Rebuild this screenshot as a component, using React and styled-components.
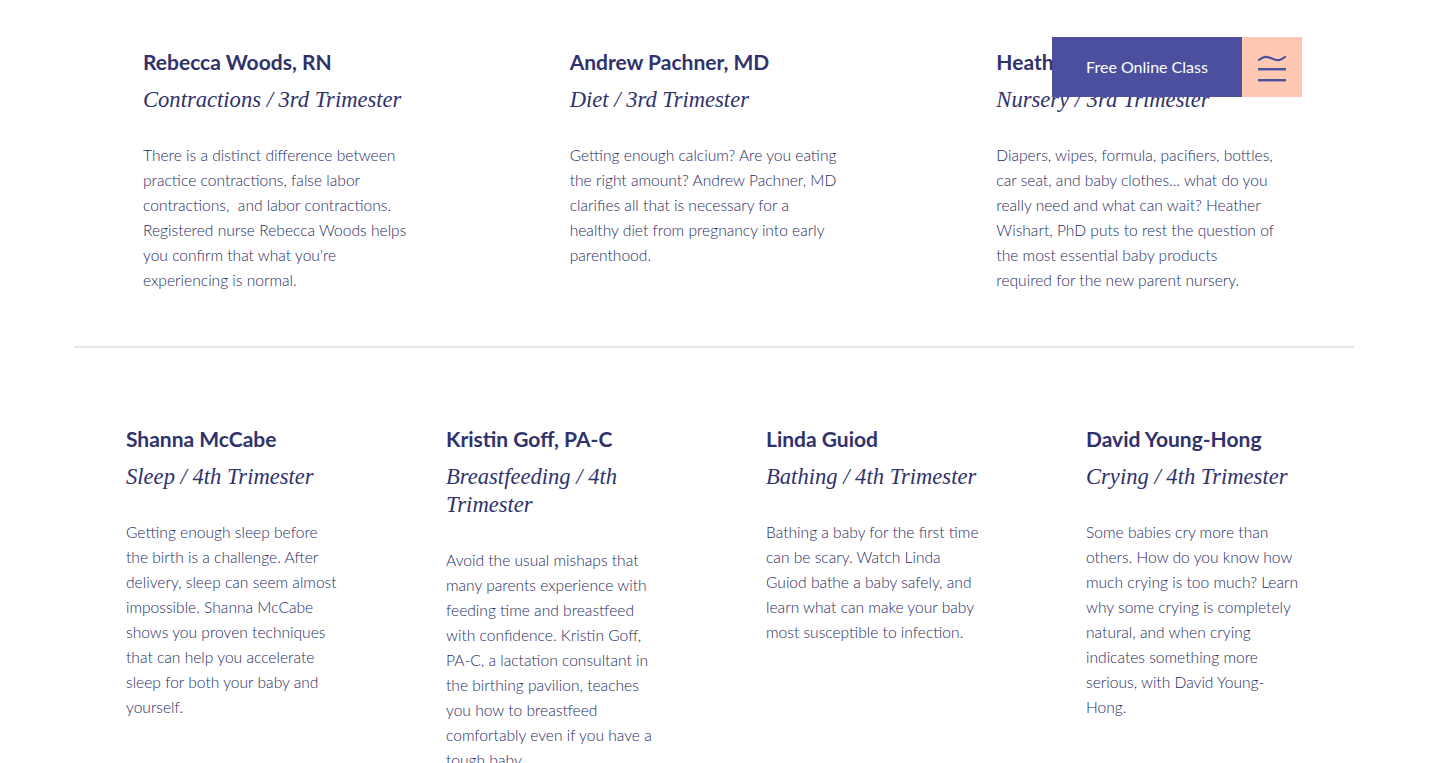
import React from 'react';
import styled, { createGlobalStyle } from 'styled-components';

const classes = [
    {
        name: 'Rebecca Woods, RN',
        topic: 'Contractions / 3rd Trimester',
        width: 272,
        text: "There is a distinct difference between practice contractions, false labor contractions,\u00a0 and labor contractions. Registered nurse Rebecca Woods helps you confirm that what you're experiencing is normal."
    },
    {
        name: 'Andrew Pachner, MD',
        topic: 'Diet / 3rd Trimester',
        width: 272,
        text: 'Getting enough calcium? Are you eating the right amount? Andrew Pachner, MD clarifies all that is necessary for a healthy diet from pregnancy into early parenthood.'
    },
    {
        name: 'Heather Wishart, PhD',
        topic: 'Nursery / 3rd Trimester',
        width: 279,
        text: 'Diapers, wipes, formula, pacifiers, bottles, car seat, and baby clothes... what do you really need and what can wait? Heather Wishart, PhD puts to rest the question of the most essential baby products required for the new parent nursery.'
    }
];

const newborn = [
    {
        name: 'Shanna McCabe',
        topic: 'Sleep / 4th Trimester',
        width: 214,
        text: 'Getting enough sleep before the birth is a challenge. After delivery, sleep can seem almost impossible. Shanna McCabe shows you proven techniques that can help you accelerate sleep for both your baby and yourself.'
    },
    {
        name: 'Kristin Goff, PA-C',
        topic: 'Breastfeeding / 4th Trimester',
        width: 214,
        text: 'Avoid the usual mishaps that many parents experience with feeding time and breastfeed with confidence. Kristin Goff, PA-C, a lactation consultant in the birthing pavilion, teaches you how to breastfeed comfortably even if you have a tough baby.'
    },
    {
        name: 'Linda Guiod',
        topic: 'Bathing / 4th Trimester',
        width: 214,
        text: 'Bathing a baby for the first time can be scary. Watch Linda Guiod bathe a baby safely, and learn what can make your baby most susceptible to infection.'
    },
    {
        name: 'David Young-Hong',
        topic: 'Crying / 4th Trimester',
        width: 218,
        text: 'Some babies cry more than others. How do you know how much crying is too much? Learn why some crying is completely natural, and when crying indicates something more serious, with David Young-Hong.'
    }
];

function ClassCard({ item, pad }) {
    return (
        <Card $pad={pad}>
            <Name>{item.name}</Name>
            <Topic $width={item.width}>{item.topic}</Topic>
            <Text $width={item.width}>{item.text}</Text>
        </Card>
    )
}

// wave + two bars, the site's menu mark
function MenuIcon() {
    return (
        <svg width="28" height="28" viewBox="0 0 28 28" fill="none">
            <path d="M1 6 C 6 2, 9 2, 14 4.5 S 22 7, 27 3" stroke="#4b4f9e" strokeWidth="2.2" strokeLinecap="round" />
            <rect x="0" y="14" width="28" height="2.4" fill="#4b4f9e" />
            <rect x="0" y="25" width="28" height="2.4" fill="#4b4f9e" />
        </svg>
    )
}

function App() {
    return (
        <>
            <GlobalStyle />
            <Page>
                <Header>
                    <ClassBtn>Free Online Class</ClassBtn>
                    <MenuBtn><MenuIcon /></MenuBtn>
                </Header>
                <Section $top>
                    <Row $cols={3}>
                        {classes.map(c => <ClassCard key={c.name} item={c} pad={69} />)}
                    </Row>
                </Section>
                <Divider />
                <Section>
                    <Row $cols={4}>
                        {newborn.map(c => <ClassCard key={c.name} item={c} pad={52} />)}
                    </Row>
                </Section>
            </Page>
        </>
    )
}

export default App;

const GlobalStyle = createGlobalStyle`
    body { margin: 0; background: #fff; overflow: hidden; }
    * { box-sizing: border-box; }
`,
    Page = styled.div`
        position: relative;
        width: 1280px;
        margin-left: 74px;
        height: 763px;
        overflow: hidden;
    `,
    Header = styled.div`
        position: absolute; top: 37px; left: 978px;
        display: flex;
        height: 60px;
        z-index: 5;
    `,
    ClassBtn = styled.div`
        display: flex; align-items: center; justify-content: center;
        width: 190px; height: 100%;
        padding-bottom: 2px;
        background-color: #4b4f9e;
        color: #fff;
        font-family: Lato, "Noto Sans", sans-serif;
        font-size: 16px;
        font-weight: 400;
    `,
    MenuBtn = styled.div`
        display: flex; align-items: center; justify-content: center;
        width: 60px; height: 100%;
        background-color: #ffc8b2;
        padding-top: 2px;
    `,
    Section = styled.div`
        padding: ${p => p.$top ? '50px 0 53px' : '79px 0 0'};
    `,
    Row = styled.div`
        display: grid;
        grid-template-columns: repeat(${p => p.$cols}, 1fr);
    `,
    Card = styled.div`
        padding: 0 0 0 ${p => p.$pad}px;
        display: flex; flex-direction: column;
    `,
    Name = styled.h3`
        margin: 0;
        font-family: Lato, "Noto Sans", sans-serif;
        font-size: 21px;
        font-weight: 700;
        line-height: 24px;
        color: #2f326b;
        white-space: nowrap;
    `,
    Topic = styled.h4`
        margin: 12px 0 0;
        max-width: ${p => p.$width}px;
        font-family: "Liberation Serif", "DejaVu Serif", serif;
        font-style: italic;
        font-weight: 400;
        font-size: 22.6px;
        line-height: 28px;
        color: #2f326b;
    `,
    Text = styled.p`
        margin: 29px 0 0;
        max-width: ${p => p.$width}px;
        font-family: Lato, "Noto Sans", sans-serif;
        font-size: 15.6px;
        font-weight: 300;
        line-height: 25px;
        color: #292c62;
    `,
    Divider = styled.hr`
        margin: 0;
        border: none;
        height: 2px;
        background-color: #e6e6e6;
    `
